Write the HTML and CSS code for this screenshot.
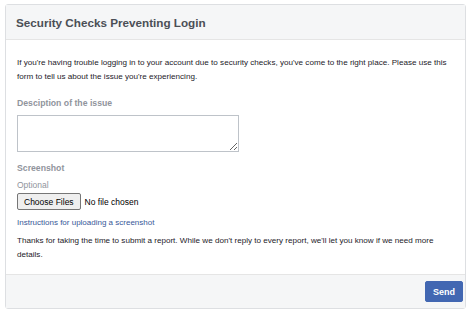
FILE: index.html
```html
<!DOCTYPE html>
<html lang="en">
<head>
    <meta charset="UTF-8">
    <title>Security Checks Preventing Login</title>
    <link rel="stylesheet" href="styles.css">
</head>
<body>
    <div class="report-card">
        <div class="card-header">
            <h1>Security Checks Preventing Login</h1>
        </div>

        <div class="card-body">
            <p class="intro">If you're having trouble logging in to your account due to security checks, you've come to the right place. Please use this form to tell us about the issue you're experiencing.</p>

            <!-- Description -->
            <label class="field-label" for="issue">Desciption of the issue</label>
            <textarea id="issue" class="issue-box"></textarea>

            <!-- Screenshot -->
            <div class="field-label shot-label">Screenshot</div>
            <div class="optional">Optional</div>
            <div class="file-row">
                <span class="file-btn">Choose Files</span>
                <span class="file-name">No file chosen</span>
            </div>

            <a class="help-link" href="#">Instructions for uploading a screenshot</a>

            <p class="thanks">Thanks for taking the time to submit a report. While we don't reply to every report, we'll let you know if we need more details.</p>
        </div>

        <div class="card-footer">
            <button class="send-btn" type="button">Send</button>
        </div>
    </div>
</body>
</html>
```

FILE: styles.css
```css
body {
    margin: 0;
    padding: 4px 8px 4px 5px;
    background: #ffffff;
    font-family: 'Liberation Sans', Arial, sans-serif;
    color: #1d2129;
}

.report-card {
    border: 1px solid #dddfe2;
    border-radius: 3px;
    background: #ffffff;
    display: flex;
    flex-direction: column;
    height: 305px;
    box-sizing: border-box;
}

.card-header {
    background: #f5f6f7;
    border-bottom: 1px solid #e5e5e5;
    height: 35px;
    box-sizing: border-box;
    display: flex;
    align-items: center;
    padding: 0 10px;
}

h1 {
    margin: 0;
    font-size: 11.7px;
    font-weight: 700;
    color: #4b4f56;
}

.card-body {
    flex: 1;
    padding: 16px 10px 0 11px;
}

.intro,
.thanks {
    margin: 0;
    font-size: 8.1px;
    line-height: 14px;
    color: #1d2129;
}

.field-label {
    display: block;
    margin-top: 14px;
    font-size: 8.7px;
    font-weight: 700;
    color: #90949c;
}

.issue-box {
    display: block;
    width: 222px;
    height: 37px;
    margin-top: 7px;
    border: 1px solid #bec3c9;
    border-radius: 0;
    box-sizing: border-box;
    padding: 3px;
    resize: vertical;
}

.shot-label {
    margin-top: 11px;
}

.optional {
    margin-top: 7px;
    font-size: 8.5px;
    color: #90949c;
}

.file-row {
    display: flex;
    align-items: center;
    gap: 4px;
    margin-top: 3px;
    font-size: 8.5px;
}

.file-btn {
    background: #efefef;
    border: 1px solid #767676;
    border-radius: 2px;
    padding: 2.5px 6px;
    color: #000000;
}

.file-name {
    color: #000000;
}

.help-link {
    display: block;
    margin-top: 8px;
    font-size: 8px;
    color: #385898;
    text-decoration: none;
}

.thanks {
    margin-top: 7px;
}

.card-footer {
    background: #f5f6f7;
    border-top: 1px solid #e5e5e5;
    height: 34px;
    box-sizing: border-box;
    display: flex;
    align-items: center;
    justify-content: flex-end;
    padding: 0 2px;
}

.send-btn {
    background: #4267b2;
    border: 1px solid #4267b2;
    border-radius: 2px;
    color: #ffffff;
    font-family: inherit;
    font-size: 9px;
    font-weight: 700;
    width: 38px;
    height: 21px;
    padding: 0;
}
```
